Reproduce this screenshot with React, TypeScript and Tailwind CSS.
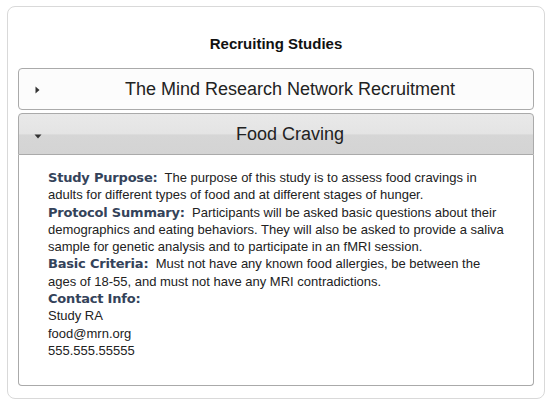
import { useState } from 'react'

interface Study {
  title: string
  purpose?: string
  protocol?: string
  criteria?: string
  contact?: string[]
}

const studies: Study[] = [
  { title: 'The Mind Research Network Recruitment' },
  {
    title: 'Food Craving',
    purpose:
      'The purpose of this study is to assess food cravings in adults for different types of food and at different stages of hunger.',
    protocol:
      'Participants will be asked basic questions about their demographics and eating behaviors. They will also be asked to provide a saliva sample for genetic analysis and to participate in an fMRI session.',
    criteria:
      'Must not have any known food allergies, be between the ages of 18-55, and must not have any MRI contradictions.',
    contact: ['Study RA', 'food@mrn.org', '555.555.55555'],
  },
]

function Label({ children }: { children: string }) {
  return (
    <span className="font-bold text-[#34435a] text-[13px] font-['DejaVu_Sans',Verdana,sans-serif] tracking-[-0.2px]">
      {children}
    </span>
  )
}

function Arrow({ open }: { open: boolean }) {
  return open ? (
    <svg width="8" height="5" viewBox="0 0 8 5" className="absolute left-[15px] top-[20px]">
      <path d="M0.5 0.5 L7.5 0.5 L4 4.5 Z" fill="#333" />
    </svg>
  ) : (
    <svg width="5" height="8" viewBox="0 0 5 8" className="absolute left-[16px] top-[17px]">
      <path d="M0.5 0.5 L4.5 4 L0.5 7.5 Z" fill="#333" />
    </svg>
  )
}

export default function App() {
  const [active, setActive] = useState(1)

  return (
    <div className="w-[552px] h-[403px] bg-white pt-[6px] px-[7px] font-['Liberation_Sans',Arial,sans-serif]">
      <div className="h-[393px] border border-[#d9d9d9] rounded-[8px] px-[10px] pt-[28px]">
        <h2 className="text-center text-[15px] font-bold text-[#111] leading-[17px]">Recruiting Studies</h2>

        <div className="mt-[16px] flex flex-col gap-[3px]">
          {studies.map((s, i) => {
            const open = i === active
            return (
              <div key={s.title}>
                <button
                  onClick={() => setActive(open ? -1 : i)}
                  className={
                    open
                      ? 'relative w-full h-[42px] pl-[28px] border border-[#aaa] rounded-t-[4px] bg-[linear-gradient(to_bottom,#e9e9e9_0%,#e4e4e4_50%,#d6d6d6_52%,#d4d4d4_100%)] text-[18px] text-[#222]'
                      : 'relative w-full h-[42px] pl-[28px] border border-[#aaa] rounded-[4px] bg-[#fcfcfc] text-[18px] text-[#222]'
                  }
                >
                  <Arrow open={open} />
                  {s.title}
                </button>
                {open && (
                  <div className="border border-t-0 border-[#aaa] rounded-b-[4px] pl-[29px] pr-[29px] pt-[14px] pb-[26px] text-[13px] leading-[17.3px] text-[#222]">
                    <div>
                      <Label>Study Purpose:</Label>&nbsp; {s.purpose}
                    </div>
                    <div>
                      <Label>Protocol Summary:</Label>&nbsp; {s.protocol}
                    </div>
                    <div>
                      <Label>Basic Criteria:</Label>&nbsp; {s.criteria}
                    </div>
                    <div>
                      <Label>Contact Info:</Label>
                    </div>
                    {s.contact?.map((c) => (
                      <div key={c}>{c}</div>
                    ))}
                  </div>
                )}
              </div>
            )
          })}
        </div>
      </div>
    </div>
  )
}
